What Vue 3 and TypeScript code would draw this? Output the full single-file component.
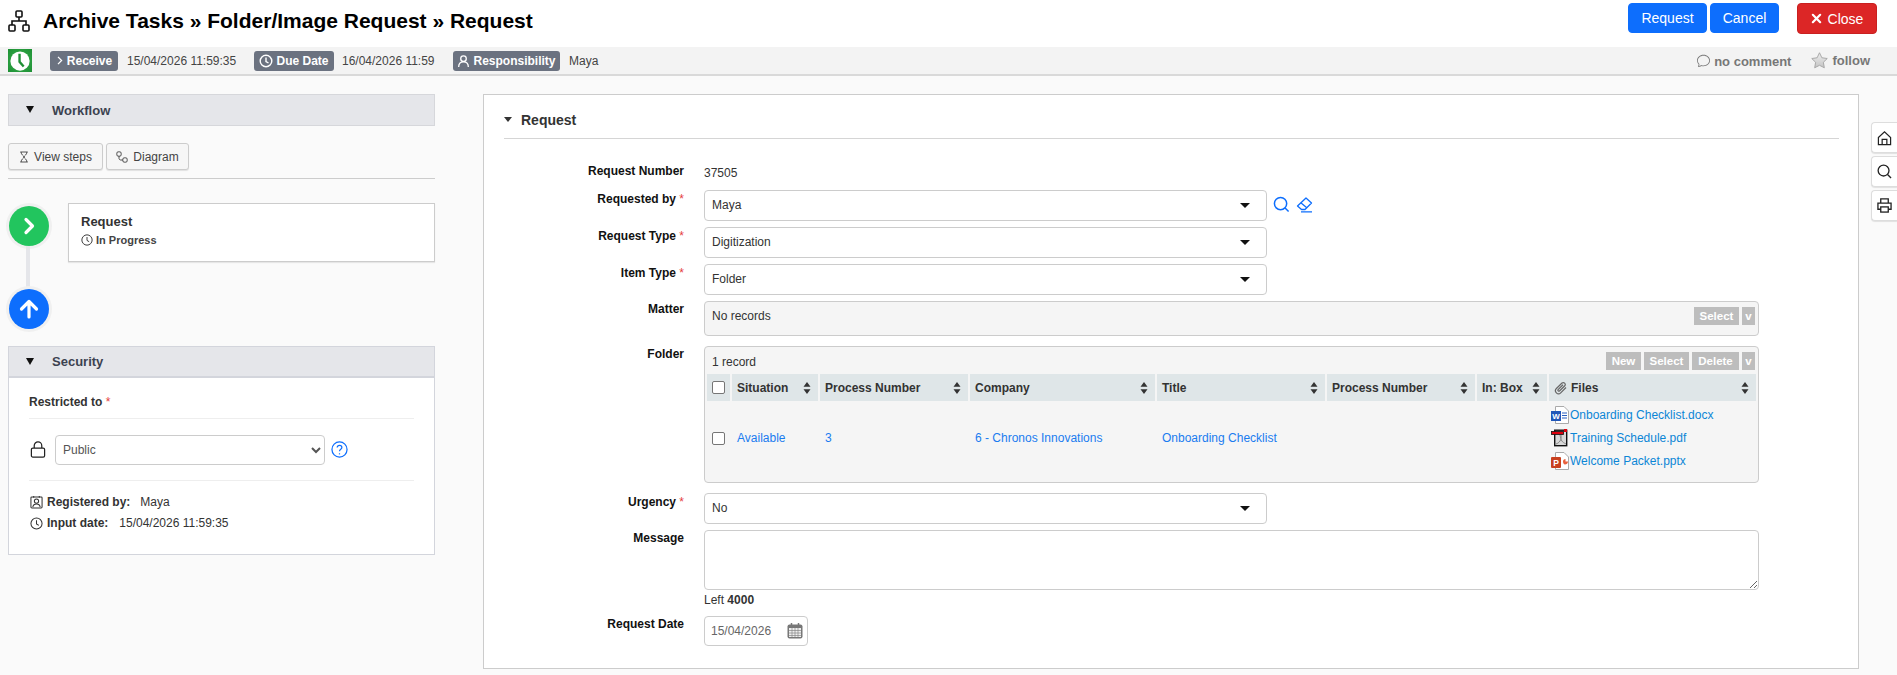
<script setup lang="ts">
interface Col { label: string; width: number; clip?: boolean }
const cols: Col[] = [
  { label: 'Situation', width: 86 },
  { label: 'Process Number', width: 148 },
  { label: 'Company', width: 185 },
  { label: 'Title', width: 168 },
  { label: 'Process Number', width: 148 },
  { label: 'In: Box', width: 70 },
  { label: 'Files', width: 207, clip: true },
]
const cells = ['Available', '3', '6 - Chronos Innovations', 'Onboarding Checklist', '', '']
const selects = [
  { label: 'Requested by', value: 'Maya', extra: true },
  { label: 'Request Type', value: 'Digitization', extra: false },
  { label: 'Item Type', value: 'Folder', extra: false },
]
</script>

<template>
  <div class="page">
    <header class="top">
      <svg class="org" viewBox="0 0 22 22" fill="none" stroke="#111" stroke-width="1.6">
        <rect x="8" y="1" width="6" height="6" rx="1" />
        <rect x="1" y="15" width="6" height="6" rx="1" />
        <rect x="15" y="15" width="6" height="6" rx="1" />
        <path d="M11 7v4M4 15v-4h14v4" />
      </svg>
      <h1>Archive Tasks » Folder/Image Request » Request</h1>
      <div class="actions">
        <button class="btn blue b1">Request</button>
        <button class="btn blue b2">Cancel</button>
        <button class="btn red">
          <svg viewBox="0 0 12 12" width="11" height="11" stroke="#fff" stroke-width="2.4" stroke-linecap="round"><path d="M2 2l8 8M10 2l-8 8" /></svg>
          Close
        </button>
      </div>
    </header>

    <div class="status">
      <div class="clockbox">
        <svg viewBox="0 0 24 24" width="22" height="22"><circle cx="12" cy="12" r="10.500" fill="#fff" /><path d="M11.500 4V13l4.500 5" fill="none" stroke="#1f8f35" stroke-width="2.600" /></svg>
      </div>
      <span class="badge receive">
        <svg viewBox="0 0 10 12" width="8" height="11" fill="none" stroke="#fff" stroke-width="1.6"><path d="M2.5 1.5L7 6l-4.500 4.500" /></svg>
        Receive
      </span>
      <span class="val v1">15/04/2026 11:59:35</span>
      <span class="badge due">
        <svg viewBox="0 0 14 14" width="14" height="14" fill="none" stroke="#fff" stroke-width="1.4"><circle cx="7" cy="7" r="5.800" /><path d="M7 3.500V7.500l2.500 1.500" /></svg>
        Due Date
      </span>
      <span class="val v2">16/04/2026 11:59</span>
      <span class="badge resp">
        <svg viewBox="0 0 14 14" width="13" height="14" fill="none" stroke="#fff" stroke-width="1.4"><circle cx="7" cy="4.500" r="3" /><path d="M1.800 13.500c0-3.500 2-5.500 5.200-5.500s5.200 2 5.200 5.500" /></svg>
        Responsibility
      </span>
      <span class="val v3">Maya</span>
      <div class="social">
        <svg class="bubble" viewBox="0 0 16 16" width="13" height="13" fill="#777"><path d="M2.678 11.894a1 1 0 0 1 .287.801 11 11 0 0 1-.398 2c1.395-.323 2.247-.697 2.634-.893a1 1 0 0 1 .71-.074A8 8 0 0 0 8 14c3.996 0 7-2.807 7-6s-3.004-6-7-6-7 2.808-7 6c0 1.468.617 2.830 1.678 3.894m-.493 3.905a22 22 0 0 1-.713.129c-.2.032-.352-.176-.273-.362a10 10 0 0 0 .244-.637l.003-.01c.248-.72.45-1.548.524-2.319C.743 11.370 0 9.760 0 8c0-3.866 3.582-7 8-7s8 3.134 8 7-3.582 7-8 7a9 9 0 0 1-2.347-.306c-.52.263-1.639.742-3.468 1.105" /></svg>
        <span class="nc">no comment</span>
        <svg class="star" viewBox="0 0 18 18" width="17" height="17">
          <defs><linearGradient id="stg" x1="0" y1="0" x2="0" y2="1"><stop offset="0" stop-color="#eeeeee" /><stop offset="1" stop-color="#c4c4c4" /></linearGradient></defs>
          <path d="M9 .8l2.500 5.300 5.700.8-4.100 4 1 5.800L9 14.100l-5.100 2.600 1-5.800-4.100-4 5.700-.8z" fill="url(#stg)" stroke="#a5a5a5" stroke-width="1" />
        </svg>
        <span class="fl">follow</span>
      </div>
    </div>

    <main class="body">
      <aside class="left">
        <div class="bar"><i class="tri"></i>Workflow</div>
        <div class="tools">
          <button class="tool t1">
            <svg viewBox="0 0 12 14" width="10" height="12" fill="none" stroke="#444" stroke-width="1.100"><path d="M1.500 1h9M1.500 13h9M2.500 1c0 3.500 3.500 4.500 3.500 6s-3.500 2.500-3.500 6M9.500 1c0 3.500-3.500 4.500-3.500 6s3.500 2.500 3.500 6" /></svg>
            View steps
          </button>
          <button class="tool t2">
            <svg viewBox="0 0 14 14" width="12" height="12" fill="none" stroke="#444" stroke-width="1.100"><rect x="1" y="1" width="5" height="5" rx="1.500" /><rect x="8" y="8" width="5" height="5" rx="1.500" /><path d="M3.500 6v2.500c0 1 .7 2 2 2H8" /></svg>
            Diagram
          </button>
        </div>
        <div class="rule"></div>

        <div class="timeline">
          <div class="nodes">
            <span class="node green">
              <svg viewBox="0 0 20 20" width="20" height="20" fill="none" stroke="#fff" stroke-width="3.200" stroke-linecap="round" stroke-linejoin="round"><path d="M7 3.500L13.500 10 7 16.500" /></svg>
            </span>
            <span class="stem"></span>
            <span class="node blue2">
              <svg viewBox="0 0 24 24" width="24" height="24" fill="none" stroke="#fff" stroke-width="3.200" stroke-linecap="round" stroke-linejoin="round"><path d="M12 20V5M4.500 12L12 4.500 19.500 12" /></svg>
            </span>
          </div>
          <div class="stepcard">
            <div class="st">Request</div>
            <div class="ss">
              <svg viewBox="0 0 14 14" width="12" height="12" fill="none" stroke="#333" stroke-width="1.100"><circle cx="7" cy="7" r="6" /><path d="M7 3.500V7.500l2.500 1.500" /></svg>
              In Progress
            </div>
          </div>
        </div>

        <section class="sec">
          <div class="bar sbar"><i class="tri"></i>Security</div>
          <div class="secbody">
            <div class="restricted">Restricted to <em>*</em></div>
            <div class="secsel">
              <svg viewBox="0 0 16 18" width="16" height="17" fill="none" stroke="#222" stroke-width="1.300"><rect x="1" y="7.500" width="14" height="9.500" rx="1.500" /><path d="M4 7.500V5a4 4 0 0 1 8 0v2.500" /></svg>
              <select class="native"><option>Public</option></select>
              <svg viewBox="0 0 18 18" width="17" height="17" fill="none" stroke="#0d6efd" stroke-width="1.300"><circle cx="9" cy="9" r="8" /><path d="M6.500 7c0-1.500 1.100-2.400 2.500-2.400s2.500.9 2.500 2.200c0 2-2.500 2-2.500 4" /><path d="M9 13v1.200" /></svg>
            </div>
            <div class="meta m1">
              <svg viewBox="0 0 14 14" width="13" height="14" fill="none" stroke="#333" stroke-width="1.100"><rect x="1" y="1.500" width="12" height="12" rx="1" /><circle cx="7" cy="6" r="2.300" /><path d="M3 12.500c.4-2.300 2-3.300 4-3.300s3.600 1 4 3.300M4 .5v2M10 .5v2" /></svg>
              <b>Registered by:</b><span class="mv1">Maya</span>
            </div>
            <div class="meta m2">
              <svg viewBox="0 0 14 14" width="13" height="13" fill="none" stroke="#333" stroke-width="1.100"><circle cx="7" cy="7" r="6" /><path d="M7 3.500V7.500l2.500 1.500" /></svg>
              <b>Input date:</b><span class="mv2">15/04/2026 11:59:35</span>
            </div>
          </div>
        </section>
      </aside>

      <section class="panel">
        <div class="phead"><i class="tri2"></i>Request</div>
        <div class="form">
          <div class="lbl numl">Request Number</div>
          <div class="num">37505</div>

          <template v-for="s in selects" :key="s.label">
            <div class="lbl req">{{ s.label }} <em>*</em></div>
            <div class="fieldrow">
              <div class="sel"><span>{{ s.value }}</span><i class="caret"></i></div>
              <template v-if="s.extra">
                <svg class="srch" viewBox="0 0 18 18" width="17" height="17" fill="none" stroke="#0d6efd" stroke-width="1.600"><circle cx="8" cy="8" r="6.500" /><path d="M12.800 12.800L16.500 16.500" /></svg>
                <svg class="eras" viewBox="0 0 17 16" width="17" height="16" fill="none" stroke="#0d6efd" stroke-width="1.300" stroke-linejoin="round"><path d="M10 1l5.500 5-6.500 6.500H5.500L1.500 9z" /><path d="M4.800 5.800l6 5M5 14.800h11" /></svg>
              </template>
            </div>
          </template>

          <div class="lbl">Matter</div>
          <div class="box matter">
            <span class="boxtext">No records</span>
            <div class="minis"><span class="mini w45">Select</span><span class="mini w13">v</span></div>
          </div>

          <div class="lbl">Folder</div>
          <div class="box folder">
            <div class="boxtop">
              <span class="rec">1 record</span>
              <div class="minis inl"><span class="mini w35">New</span><span class="mini w45">Select</span><span class="mini w47">Delete</span><span class="mini w13">v</span></div>
            </div>
            <table class="grid">
              <colgroup>
                <col style="width: 23px" />
                <col v-for="(c, i) in cols" :key="i" :style="{ width: c.width + 'px' }" />
              </colgroup>
              <thead>
                <tr>
                  <th class="ck"><span class="check"></span></th>
                  <th v-for="(c, i) in cols" :key="i">
                    <div class="thin">
                      <svg v-if="c.clip" viewBox="0 0 14 14" width="14" height="14" fill="none" stroke="#666" stroke-width="1.200"><path d="M12 6.500l-5.300 5.300a3 3 0 0 1-4.300-4.300L8 2a2 2 0 0 1 2.800 2.800L5.500 10a1 1 0 0 1-1.400-1.400L9 3.800" /></svg>
                      <span>{{ c.label }}</span>
                      <svg class="sort" viewBox="0 0 8 12" width="8" height="12" fill="#333"><path d="M4 0l3.500 4.700h-7zM4 12L.5 7.300h7z" /></svg>
                    </div>
                  </th>
                </tr>
              </thead>
              <tbody>
                <tr>
                  <td class="ck"><span class="check"></span></td>
                  <td v-for="(c, i) in cells" :key="i"><a>{{ c }}</a></td>
                  <td class="files">
                    <div class="file">
                      <svg viewBox="0 0 18 18" width="18" height="18"><path d="M4.500.5H13L17.500 5v12.500h-13z" fill="#fff" stroke="#aaa" /><path d="M11 7h5M11 9.500h5M11 12h5" stroke="#2b5fc0" /><rect x="0" y="5" width="10" height="10" fill="#1f56b8" /><text x="5" y="13.200" font-size="8" font-weight="700" text-anchor="middle" fill="#fff" font-family="Liberation Sans">W</text></svg>
                      <a>Onboarding Checklist.docx</a>
                    </div>
                    <div class="file">
                      <svg viewBox="0 0 18 18" width="18" height="18"><rect x="3.700" y="1.200" width="12" height="15.500" fill="#d8d8d8" stroke="#111" stroke-width="1.400" /><path d="M9 6c1 6 2 7 6 9M5 15c3-1 6-4 5-9" fill="none" stroke="#888" /><rect x="0.500" y="2.500" width="12" height="3" fill="#e0000e" stroke="#111" stroke-width=".8" /><rect x="13" y="0" width="3" height="3" fill="#e0000e" /></svg>
                      <a>Training Schedule.pdf</a>
                    </div>
                    <div class="file">
                      <svg viewBox="0 0 18 18" width="18" height="18"><path d="M4.500.5H13L17.500 5v12.500h-13z" fill="#fff" stroke="#aaa" /><path d="M12 9.500c0-1.500 1-2.500 2.500-2.500v2.500h2.500c0 2-1.500 3-3 3-1.300 0-2-1.500-2-3z" fill="#e8603c" /><rect x="0" y="5" width="10" height="11" rx="1" fill="#c8401f" /><text x="5" y="13.500" font-size="8.500" font-weight="700" text-anchor="middle" fill="#fff" font-family="Liberation Sans">P</text></svg>
                      <a>Welcome Packet.pptx</a>
                    </div>
                  </td>
                </tr>
              </tbody>
            </table>
          </div>

          <div class="lbl req">Urgency <em>*</em></div>
          <div class="fieldrow"><div class="sel"><span>No</span><i class="caret"></i></div></div>

          <div class="lbl">Message</div>
          <div class="msg">
            <textarea class="ta"></textarea>
            <div class="left4">Left <b>4000</b></div>
          </div>

          <div class="lbl">Request Date</div>
          <div class="date">
            <span>15/04/2026</span>
            <svg viewBox="0 0 16 16" width="16" height="16"><rect x=".5" y="1.500" width="15" height="14" rx="2" fill="#777" /><rect x="2" y="5" width="12" height="9" fill="#eee" /><path d="M2 7.500h12M2 10h12M2 12.500h12M5 5v9M8 5v9M11 5v9" stroke="#888" stroke-width=".7" /><path d="M4.500 0v3M11.500 0v3" stroke="#777" stroke-width="1.500" /></svg>
          </div>
        </div>
      </section>
    </main>

    <nav class="dock">
      <span class="dockbtn">
        <svg viewBox="0 0 16 16" width="15" height="16" fill="none" stroke="#222" stroke-width="1.300"><path d="M1.500 7.500L8 1.500l6.500 6v7.500h-13z" /><path d="M5.500 15v-5.500h5V15" /></svg>
      </span>
      <span class="dockbtn">
        <svg viewBox="0 0 16 16" width="15" height="15" fill="none" stroke="#222" stroke-width="1.400"><circle cx="7" cy="7" r="5.800" /><path d="M11.200 11.200L15 15" /></svg>
      </span>
      <span class="dockbtn">
        <svg viewBox="0 0 16 16" width="15" height="15" fill="none" stroke="#222" stroke-width="1.400"><path d="M4 5V1h8v4M4 12H1V5.500h14V12h-3" /><rect x="4" y="9.500" width="8" height="5.500" /></svg>
      </span>
    </nav>
  </div>
</template>

<style>
html, body { margin: 0; background: #fafafa; }
</style>

<style scoped>
.page { position: relative; width: 1897px; height: 675px; overflow: hidden; font-family: "Liberation Sans", Arial, sans-serif; font-size: 12px; color: #333; background: #fafafa; }
.top { height: 47px; background: #fff; display: flex; align-items: flex-start; padding-left: 8px; box-sizing: border-box; }
.org { width: 22px; height: 22px; margin-top: 10px; flex: none; }
h1 { margin: 8px 0 0 13px; font-size: 21px; line-height: 26px; font-weight: 700; color: #000; }
.actions { margin-left: auto; display: flex; align-items: flex-start; padding-top: 3px; padding-right: 20px; }
.btn { height: 30px; border-radius: 4px; border: 1px solid #0d6efd; color: #fff; font: 14px "Liberation Sans", Arial, sans-serif; padding: 0; }
.blue { background: #0d6efd; }
.b1 { width: 79px; margin-right: 3px; }
.b2 { width: 69px; margin-right: 18px; }
.red { width: 80px; height: 31px; background: #dc2626; border-color: #c92020; display: flex; align-items: center; justify-content: center; gap: 6px; }

.status { background: #f3f3f3; border-bottom: 2px solid #d9d9d9; display: flex; align-items: center; padding-left: 8px; height: 27px; }
.clockbox { width: 24px; height: 23px; background: radial-gradient(circle, #3cb34f, #1d8f34); display: flex; align-items: center; justify-content: center; flex: none; margin-right: 18px; }
.badge { height: 20px; border-radius: 3px; background: #6b7280; color: #fff; font-weight: 700; font-size: 12px; display: inline-flex; align-items: center; justify-content: center; gap: 3px; box-sizing: border-box; flex: none; }
.receive { width: 68px; }
.due { width: 80px; }
.resp { width: 107px; }
.val { font-size: 12px; color: #444; flex: none; white-space: nowrap; }
.v1 { margin: 0 18px 0 9px; width: 109px; }
.v2 { margin: 0 18px 0 8px; width: 93px; }
.v3 { margin-left: 9px; }
.social { margin-left: auto; display: flex; align-items: center; padding-right: 27px; font-weight: 700; font-size: 13px; color: #777; }
.nc { margin-left: 4px; margin-right: 20px; padding-top: 1px; }
.fl { margin-left: 4px; }

.body { display: flex; align-items: flex-start; padding: 18px 0 0 8px; }
.left { width: 427px; flex: none; }
.bar { height: 32px; background: #e5e6ea; border: 1px solid #d6d7db; box-sizing: border-box; display: flex; align-items: center; font-weight: 700; font-size: 13px; color: #3c4250; padding-left: 43px; position: relative; }
.tri { position: absolute; left: 17px; top: 11px; width: 0; height: 0; border-left: 4px solid transparent; border-right: 4px solid transparent; border-top: 7px solid #111; }
.tools { display: flex; gap: 3px; margin-top: 17px; }
.tool { height: 27px; background: #f6f6f6; border: 1px solid #ccc; border-radius: 3px; font: 12px "Liberation Sans", Arial, sans-serif; color: #444; display: inline-flex; align-items: center; justify-content: center; gap: 5px; padding: 0; box-shadow: 0 1px 1px rgba(0,0,0,.1); }
.t1 { width: 95px; }
.t2 { width: 83px; }
.rule { height: 1px; background: #ccc; margin-top: 8px; }
.timeline { display: flex; height: 143px; padding-top: 24px; box-sizing: border-box; }
.nodes { width: 60px; display: flex; flex-direction: column; align-items: center; margin-left: -9px; padding-top: 3px; flex: none; }
.node { width: 40px; height: 40px; border-radius: 50%; display: flex; align-items: center; justify-content: center; box-shadow: 0 0 0 3px #f0f0f0; flex: none; }
.green { background: #22c55e; }
.blue2 { background: #0d6efd; }
.stem { width: 4px; height: 43px; background: #e5e6ea; flex: none; margin-left: -2px; }
.stepcard { margin-left: 9px; flex: 1; height: 59px; background: #fff; border: 1px solid #ccc; box-shadow: 0 1px 1px rgba(0,0,0,.08); box-sizing: border-box; padding: 10px 12px; }
.st { font-weight: 700; font-size: 13px; color: #333; line-height: 16px; }
.ss { font-weight: 700; font-size: 11px; line-height: 14px; margin-top: 3px; display: flex; align-items: center; gap: 3px; color: #444; }
.sec { margin-top: 24px; }
.sbar { border-bottom-width: 2px; border-color: #d3d5dc; }
.secbody { height: 177px; background: #fff; border: 1px solid #d3d5dc; border-top: none; box-sizing: border-box; padding: 0 20px; }
.restricted { height: 41px; border-bottom: 1px solid #eee; font-weight: 700; font-size: 12px; color: #333; box-sizing: border-box; padding-top: 16px; line-height: 16px; }
em { color: #e53e3e; font-style: normal; font-weight: 400; }
.secsel { height: 62px; border-bottom: 1px solid #eee; display: flex; align-items: center; box-sizing: border-box; }
.secsel > svg:first-child { margin: 0 9px 0 1px; }
.native { width: 270px; height: 30px; border: 1px solid #ccc; border-radius: 4px; background: #fff; font: 12px "Liberation Sans", Arial, sans-serif; color: #555; padding-left: 3px; margin-right: 6px; }
.meta { display: flex; align-items: center; font-size: 12px; line-height: 16px; color: #333; }
.meta svg { margin: 0 4px 0 1px; flex: none; }
.m1 { margin-top: 13px; }
.m2 { margin-top: 5px; }
.mv1 { margin-left: 10px; }
.mv2 { margin-left: 11px; }

.panel { width: 1376px; height: 575px; margin-left: 48px; background: #fff; border: 1px solid #ccc; box-sizing: border-box; padding: 0 19px 0 20px; flex: none; }
.phead { height: 44px; border-bottom: 1px solid #d5d5d5; font-weight: 700; font-size: 14px; color: #333; display: flex; align-items: center; padding: 6px 0 0 17px; position: relative; box-sizing: border-box; }
.tri2 { position: absolute; left: 0; top: 22px; width: 0; height: 0; border-left: 4.500px solid transparent; border-right: 4.500px solid transparent; border-top: 5px solid #333; }
.form { display: grid; grid-template-columns: 180px 1055px; column-gap: 20px; margin-top: 23px; row-gap: 6px; }
.lbl { font-weight: 700; font-size: 12px; line-height: 16px; color: #111; text-align: right; }
.req { padding-top: 1px; }
.numl { margin-top: 1px; }
.num { line-height: 16px; margin: 3px 0 3px; color: #333; }
.fieldrow { display: flex; align-items: center; height: 31px; gap: 4px; }
.sel { width: 563px; height: 31px; border: 1px solid #ccc; border-radius: 4px; background: #fff; box-sizing: border-box; padding: 0 16px 1px 7px; display: flex; align-items: center; justify-content: space-between; color: #333; }
.caret { width: 0; height: 0; border-left: 5px solid transparent; border-right: 5px solid transparent; border-top: 5px solid #111; }
.srch { margin: 0 2px 2px 2px; }
.eras { margin-bottom: 2px; }
.box { background: #f5f5f5; border: 1px solid #ccc; border-radius: 4px; box-sizing: border-box; }
.matter { height: 35px; display: flex; justify-content: space-between; padding: 5px 3px 0 7px; margin-bottom: 4px; }
.boxtext { line-height: 16px; padding-top: 1px; }
.minis { display: flex; gap: 3px; height: 18px; }
.mini { background: #bdbdbd; color: #fff; font-weight: 700; font-size: 11.500px; line-height: 18px; text-align: center; display: block; }
.w45 { width: 45px; } .w13 { width: 13px; } .w35 { width: 35px; } .w47 { width: 47px; }
.folder { height: 137px; margin-bottom: 4px; }
.boxtop { height: 27px; display: flex; justify-content: space-between; padding: 5px 3px 0 7px; box-sizing: border-box; }
.rec { line-height: 20px; }
.grid { border-collapse: separate; border-spacing: 2px 0; table-layout: fixed; width: 1053px; }
th { background: #dfe6e8; height: 27px; padding: 0 7px 0 5px; text-align: left; font-weight: 700; font-size: 12px; color: #333; white-space: nowrap; box-sizing: border-box; }
th.ck, td.ck { padding: 0 0 0 5px; }
.thin { display: flex; align-items: center; justify-content: space-between; }
.thin span { flex: 1; }
.thin svg:first-child:not(.sort) { margin-right: 3px; }
.check { display: block; width: 13px; height: 13px; border: 1px solid #767676; border-radius: 2px; background: #fff; box-sizing: border-box; }
td { height: 74px; padding: 0 5px; vertical-align: middle; white-space: nowrap; }
a { color: #1a7cf0; }
.files { padding: 0 0 0 2px; }
.file { display: flex; align-items: center; height: 23px; }
.file a { color: #0c86d6; margin-left: 1px; }
.msg { display: flex; flex-direction: column; }
.ta { width: 1055px; height: 60px; border: 1px solid #ccc; border-radius: 4px; box-sizing: border-box; display: block; background: #fff; margin: 0; }
.left4 { line-height: 16px; margin-top: 2px; margin-bottom: 2px; }
.date { width: 104px; height: 30px; border: 1px solid #ccc; border-radius: 4px; background: #fff; box-sizing: border-box; display: flex; align-items: center; justify-content: space-between; padding: 0 4px 0 6px; color: #666; }

.dock { position: absolute; right: 0; top: 122px; display: flex; flex-direction: column; gap: 3px; }
.dockbtn { width: 26px; height: 31px; background: #fff; border: 1px solid #ddd; border-right: none; border-radius: 4px 0 0 4px; box-sizing: border-box; display: flex; align-items: center; justify-content: center; box-shadow: 0 1px 1px rgba(0,0,0,.1); }
</style>
